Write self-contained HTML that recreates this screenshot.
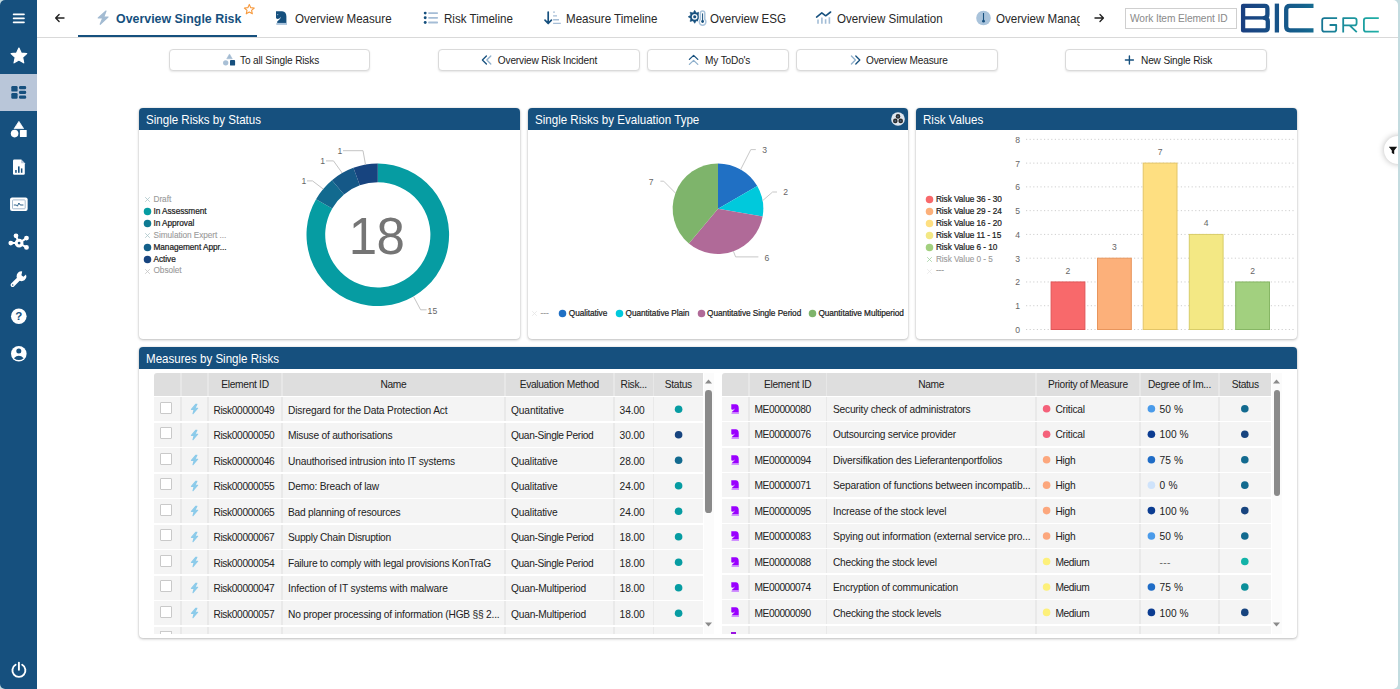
<!DOCTYPE html><html><head><meta charset="utf-8"><title>BIC GRC</title><style>
*{box-sizing:border-box;margin:0;padding:0}
html,body{width:1400px;height:689px;overflow:hidden;background:#c3dce0;font-family:"Liberation Sans",sans-serif;}
#app{position:absolute;left:0;top:0;width:1398px;height:689px;background:#fff;border-radius:5px;overflow:hidden}
.abs{position:absolute}
#side{position:absolute;left:0;top:0;width:37px;height:689px;background:#16507e}
#side .act{position:absolute;left:0;top:74px;width:37px;height:37px;background:#b9c6d9}
#side svg{position:absolute;overflow:visible}
#topline{position:absolute;left:37px;top:36.6px;width:1361px;height:1px;background:#d9d9d9}
#tabline{position:absolute;left:78.2px;top:34.5px;width:178.8px;height:2.4px;background:#16507e}
.tab{position:absolute;top:11px;height:16px;line-height:16px;font-size:12.6px;color:#282828;white-space:nowrap;transform:scaleX(.92);transform-origin:0 50%}
.tab.b{font-weight:700;color:#16507e;font-size:13.3px;transform:scaleX(.932)}
.btn{position:absolute;top:49px;height:22px;border:1px solid #dadada;border-radius:4px;background:#fff;box-shadow:0 1px 2px rgba(0,0,0,.10)}
.bt{position:absolute;top:54px;height:14px;line-height:14px;font-size:10.1px;letter-spacing:-0.15px;color:#222;white-space:nowrap}
.panel{position:absolute;background:#fff;border-radius:4px;box-shadow:0 1px 3px rgba(0,0,0,.24), 0 0 1.5px rgba(0,0,0,.16)}
.ph{position:absolute;left:0;top:0;right:0;height:21.3px;background:#16507e;border-radius:4px 4px 0 0}
.pt{position:absolute;left:7.2px;top:4px;height:16px;line-height:16px;font-size:12.6px;color:#fff;white-space:nowrap;transform:scaleX(.918);transform-origin:0 50%}
.lg{position:absolute;height:10px;line-height:10px;font-size:8.25px;letter-spacing:-0.05px;color:#1c1c1c;white-space:nowrap;-webkit-text-stroke:.22px #1c1c1c}
.lg.off{color:#9a9a9a;-webkit-text-stroke:.1px #9a9a9a}
.dot{position:absolute;border-radius:50%}
.ax{position:absolute;font-size:8.6px;line-height:10px;height:10px;color:#666;white-space:nowrap}
.hc{position:absolute;top:373px;height:22.6px;background:#dedede;}
.ht{position:absolute;top:378.9px;height:12px;line-height:12px;font-size:10.2px;letter-spacing:-0.3px;color:#222;white-space:nowrap;text-align:center}
.rc{position:absolute;height:24px;background:#f4f4f4}
.ct{position:absolute;height:12px;line-height:12px;font-size:10.2px;letter-spacing:-0.19px;color:#222;white-space:nowrap}
.ct.id{letter-spacing:-0.32px}
.cb{position:absolute;width:12px;height:12px;background:#fff;border:1px solid #cfcfcf;border-radius:1px}
</style></head><body><div id="app">
<div id="side"><div class="act"></div>
<svg style="left:0;top:0" width="37" height="689" viewBox="0 0 37 689">
<g stroke="#fff" stroke-width="1.7" stroke-linecap="round"><path d="M13.6 14.3H24M13.6 18.3H24M13.6 22.3H24"/></g>
<polygon points="18.90,48.00 21.19,53.04 26.70,53.67 22.61,57.41 23.72,62.83 18.90,60.10 14.08,62.83 15.19,57.41 11.10,53.67 16.61,53.04" fill="#fff" stroke="#fff" stroke-width="1.2" stroke-linejoin="round"/>
<g fill="#16507e"><rect x="11.3" y="86" width="6.3" height="5.6" rx="1.2"/><rect x="11.3" y="93" width="6.3" height="5.8" rx="1.2"/><rect x="19" y="86" width="7.2" height="3.3" rx="1.4"/><rect x="19" y="90.8" width="7.2" height="3.3" rx="1.4"/><rect x="19" y="95.5" width="7.2" height="3.3" rx="1.4"/></g>
<g fill="#fff"><path d="M18.9 121.4L23.6 128.6H14.2Z" stroke="#fff" stroke-width=".8" stroke-linejoin="round"/><circle cx="14.6" cy="133.6" r="3.8"/><rect x="19.9" y="130" width="6.8" height="7" rx=".6"/></g>
<g><path d="M14.2 159.6H21.2L24.8 163.2V173.6Q24.8 174.8 23.6 174.8H14.2Q13 174.8 13 173.6V160.8Q13 159.6 14.2 159.6Z" fill="#fff"/><path d="M21.2 159.6V163.2H24.8Z" fill="#b9c6d9"/><g fill="#16507e"><rect x="15.2" y="170" width="1.5" height="2.8"/><rect x="18" y="166.4" width="1.6" height="6.4"/><rect x="20.9" y="168.4" width="1.5" height="4.4"/></g></g>
<g><rect x="10.05" y="197.6" width="17.6" height="13.4" rx="2" fill="#fff"/><rect x="12.5" y="199.9" width="12.7" height="8.9" rx=".8" fill="#fff" stroke="#9db4cb" stroke-width=".9"/><path d="M13.8 205H16.4L17.4 206.2L18.9 203L20.2 205H23.4" fill="none" stroke="#16507e" stroke-width=".9" stroke-linejoin="round"/></g>
<g stroke="#fff" stroke-width="2" fill="#fff"><path d="M19.1 243.1L16 235.9M19.1 243.1L26.4 238.2M19.1 243.1L10.9 243.1M19.1 243.1L26.4 247.4" fill="none"/><circle cx="16" cy="235.8" r="1.4"/><circle cx="26.5" cy="238.1" r="1.4"/><circle cx="10.8" cy="243.1" r="1.4"/><circle cx="26.5" cy="247.4" r="1.4"/></g><circle cx="19.1" cy="243.1" r="2.9" fill="#16507e" stroke="#fff" stroke-width="3"/>
<g><path d="M12.6 285L20.2 277.4" stroke="#fff" stroke-width="4" stroke-linecap="round"/><path d="M26 274.4A4.9 4.9 0 1 1 22.2 271.4L21.4 275.2L23.4 276.8Z" fill="#fff"/><circle cx="12.7" cy="284.9" r=".75" fill="#16507e"/></g>
<circle cx="18.8" cy="316.2" r="7.8" fill="#fff"/><text x="18.8" y="320.3" font-size="11.5" font-weight="700" text-anchor="middle" fill="#16507e" font-family="Liberation Sans">?</text>
<circle cx="18.8" cy="353.7" r="7.8" fill="#fff"/><circle cx="18.8" cy="351.1" r="2.5" fill="#16507e"/><path d="M13.9 358.2Q18.8 353.4 23.7 358.2Q18.8 362 13.9 358.2Z" fill="#16507e"/>
<g fill="none" stroke="#fff" stroke-width="1.9" stroke-linecap="round"><path d="M15.6 664.8A6.5 6.5 0 1 0 22.2 664.8"/><path d="M18.9 662.8V669.8"/></g>
</svg></div>
<div id="topline"></div><div id="tabline"></div>
<svg class="abs" style="left:37px;top:0" width="1361" height="37" viewBox="37 0 1361 37">
<g fill="none" stroke="#222" stroke-width="1.4" stroke-linecap="round" stroke-linejoin="round"><path d="M64 18H55.8M59.1 14.6L55.7 18L59.1 21.4"/></g>
<path d="M106 11L98.2 17.9H102.8L100.2 24.3L108 17H103.7Z" fill="#a3bbd2" stroke="#a3bbd2" stroke-width="1.2" stroke-linejoin="round"/>
<polygon points="249.30,4.40 250.71,7.66 254.25,7.99 251.58,10.34 252.36,13.81 249.30,12.00 246.24,13.81 247.02,10.34 244.35,7.99 247.89,7.66" fill="none" stroke="#f79a3e" stroke-width="1.1" stroke-linejoin="round"/>
<path d="M276 11.2H282.2Q286.4 11.6 286.4 16.6V22.9H277.2V21.4Q280.6 19.6 281 16.8Q279.6 19 277.6 19L276 18.2Z" fill="#16507e"/><rect x="276.3" y="22.9" width="10.7" height="2" fill="#a9c3db"/><circle cx="277.7" cy="14.6" r=".6" fill="#a9c3db"/>
<g fill="#16507e"><circle cx="425.2" cy="13.1" r="1.45"/><circle cx="425.2" cy="17.8" r="1.45"/><circle cx="425.2" cy="22.5" r="1.45"/></g><g stroke="#a5bdd6" stroke-width="1.8" stroke-linecap="round"><path d="M429 13.1H437.2M429 17.8H437.2M429 22.5H437.2"/></g>
<g fill="none" stroke="#16507e" stroke-width="1.7" stroke-linecap="round" stroke-linejoin="round"><path d="M548.2 12V23.2M545 20.2L548.2 23.5L551.4 20.2"/></g><g stroke="#a5bdd6" stroke-width="1.4"><path d="M553.1 12.1H554.9M553.1 15.9H557M553.1 19.7H559M553.1 23.4H560.8"/></g>
<polygon points="694.70,10.30 696.31,12.92 699.30,12.20 698.58,15.19 701.20,16.80 698.58,18.41 699.30,21.40 696.31,20.68 694.70,23.30 693.09,20.68 690.10,21.40 690.82,18.41 688.20,16.80 690.82,15.19 690.10,12.20 693.09,12.92" fill="#16507e" stroke="#16507e" stroke-width=".6" stroke-linejoin="round"/><circle cx="694.70" cy="16.80" r="2.9" fill="#f4f7fa"/><circle cx="694.70" cy="16.80" r="1.5" fill="#16507e"/>
<g transform="translate(-.3 0)"><path d="M700.7 19.4V13.2A2.2 2.2 0 0 1 705.1 13.2V19.4A3.3 3.3 0 1 1 700.7 19.4Z" fill="#fff" stroke="#fff" stroke-width="3.2"/><path d="M700.7 19.4V13.2A2.2 2.2 0 0 1 705.1 13.2V19.4A3.3 3.3 0 1 1 700.7 19.4Z" fill="#fff" stroke="#a9c3db" stroke-width="1.5"/><path d="M702.9 13.4V21" stroke="#16507e" stroke-width="1"/><circle cx="702.9" cy="21.5" r="1.4" fill="#16507e"/></g>
<g stroke="#a3bdd6" stroke-width="1.6"><path d="M818 19.6V23.7M821.9 17.4V23.7M825.6 19.2V23.7M829.4 17.2V23.7"/></g><path d="M816.6 17.1L821.8 12.8L825.7 15.8L830.6 12" fill="none" stroke="#16507e" stroke-width="1.6" stroke-linejoin="round" stroke-linecap="round"/>
<circle cx="983.5" cy="18" r="7.3" fill="#a9c3db"/><path d="M983.5 13V20.4" stroke="#16507e" stroke-width="1.1"/><circle cx="983.5" cy="21.2" r="1.4" fill="#16507e"/>
<g fill="none" stroke="#222" stroke-width="1.4" stroke-linecap="round" stroke-linejoin="round"><path d="M1095 18H1103.3M1100 14.6L1103.4 18L1100 21.4"/></g>
</svg>
<div class="tab b" style="left:116.3px">Overview Single Risk</div>
<div class="tab" style="left:294.8px">Overview Measure</div>
<div class="tab" style="left:444.0px">Risk Timeline</div>
<div class="tab" style="left:566.2px">Measure Timeline</div>
<div class="tab" style="left:710.3px">Overview ESG</div>
<div class="tab" style="left:836.8px">Overview Simulation</div>
<div class="tab" style="left:996.4px;width:90.9px;overflow:hidden">Overview Management</div>
<div class="abs" style="left:1125px;top:7.5px;width:112px;height:21px;border:1px solid #cfcfcf;background:#fff"></div>
<div class="abs" style="left:1130px;top:12.8px;height:12px;line-height:12px;font-size:10.2px;letter-spacing:-0.1px;color:#8a8a8a;white-space:nowrap">Work Item Element ID</div>
<svg class="abs" style="left:1236px;top:0" width="150" height="37" viewBox="1236 0 150 37"><defs><linearGradient id="lg1" gradientUnits="userSpaceOnUse" x1="1241" y1="0" x2="1379" y2="0"><stop offset="0" stop-color="#1a3f80"/><stop offset=".45" stop-color="#14618d"/><stop offset="1" stop-color="#1fb0a6"/></linearGradient></defs>
<g fill="none" stroke="url(#lg1)" stroke-width="4.3" stroke-linejoin="round">
<path d="M1243.1 5.8H1264.6Q1267.4 5.8 1267.4 8.6V14.6Q1267.4 17.4 1264.6 17.9Q1267.8 18.4 1267.8 21.2V27.6Q1267.8 30.4 1265 30.4H1243.1Z" />
<path d="M1243.1 17.9H1264.6" stroke-width="3.4"/>
<path d="M1276.9 3.6V32.5" stroke-linejoin="miter"/>
<path d="M1313.5 5.8H1290Q1286.2 5.8 1286.2 9.6V26.6Q1286.2 30.4 1290 30.4H1313.5" />
</g>
<g fill="none" stroke="url(#lg1)" stroke-width="1.8" stroke-linejoin="round">
<path d="M1337.1 18.1H1324.4Q1322.2 18.1 1322.2 20.3V29.4Q1322.2 31.6 1324.4 31.6H1334Q1336.2 31.6 1336.2 29.4V25H1329.6"/>
<path d="M1343.2 32.5V18.1H1354.4Q1356.6 18.1 1356.6 20.3V23.2Q1356.6 25.4 1354.4 25.4H1343.2M1349.6 25.4L1356.8 32.2"/>
<path d="M1378.8 18.1H1366.1Q1363.9 18.1 1363.9 20.3V29.4Q1363.9 31.6 1366.1 31.6H1378.8"/>
</g></svg>
<div class="btn" style="left:169.0px;width:201.0px"></div>
<div class="btn" style="left:438.0px;width:201.5px"></div>
<div class="btn" style="left:647.0px;width:142.0px"></div>
<div class="btn" style="left:796.0px;width:201.5px"></div>
<div class="btn" style="left:1065.0px;width:201.5px"></div>
<svg class="abs" style="left:160px;top:45px" width="1120" height="30" viewBox="160 45 1120 30">
<path d="M229.5 53.9L232.3 58.8H226.7Z" fill="#a3bbd2" stroke="#a3bbd2" stroke-width=".5" stroke-linejoin="round"/><circle cx="225.7" cy="62.8" r="2.65" fill="#a9c0d6"/><rect x="230" y="60" width="5.1" height="5.6" rx=".9" fill="#16507e"/>
<g fill="none" stroke-width="1.3" stroke-linecap="round" stroke-linejoin="round"><path d="M486.4 56L482.4 60L486.4 64" stroke="#16507e"/><path d="M490.8 56L486.8 60L490.8 64" stroke="#8fb0cc"/></g>
<g fill="none" stroke-width="1.3" stroke-linecap="round" stroke-linejoin="round"><path d="M689.4 59.4L693.6 55.4L697.8 59.4" stroke="#16507e"/><path d="M689.4 64.4L693.6 60.4L697.8 64.4" stroke="#8fb0cc"/></g>
<g fill="none" stroke-width="1.3" stroke-linecap="round" stroke-linejoin="round"><path d="M851.4 56L855.4 60L851.4 64" stroke="#8fb0cc"/><path d="M855.8 56L859.8 60L855.8 64" stroke="#16507e"/></g>
<path d="M1125.4 60H1133.4M1129.4 56V64" stroke="#16507e" stroke-width="1.4" stroke-linecap="round"/>
</svg>
<div class="bt" style="left:240.0px">To all Single Risks</div>
<div class="bt" style="left:497.8px">Overview Risk Incident</div>
<div class="bt" style="left:705.0px">My ToDo's</div>
<div class="bt" style="left:866.0px">Overview Measure</div>
<div class="bt" style="left:1141.0px">New Single Risk</div>
<div class="panel" style="left:139.0px;top:108.4px;width:380.9px;height:231.0px"><div class="ph"></div><div class="pt">Single Risks by Status</div></div>
<div class="panel" style="left:527.6px;top:108.4px;width:380.7px;height:231.0px"><div class="ph"></div><div class="pt">Single Risks by Evaluation Type</div></div>
<div class="panel" style="left:916.1px;top:108.4px;width:380.9px;height:231.0px"><div class="ph"></div><div class="pt">Risk Values</div></div>
<div class="panel" style="left:139.0px;top:347.0px;width:1158.0px;height:291.3px"><div class="ph" style="height:21.7px"></div><div class="pt">Measures by Single Risks</div></div>
<svg class="abs" style="left:139px;top:130px" width="1160" height="210" viewBox="139 130 1160 210">
<path d="M377.80 163.50A71.30 71.30 0 1 1 316.05 199.15L332.25 208.50A52.60 52.60 0 1 0 377.80 182.20Z" fill="#069ca2"/>
<path d="M316.05 199.15A71.30 71.30 0 0 1 331.97 180.18L343.99 194.51A52.60 52.60 0 0 0 332.25 208.50Z" fill="#126a8f"/>
<path d="M331.97 180.18A71.30 71.30 0 0 1 353.41 167.80L359.81 185.37A52.60 52.60 0 0 0 343.99 194.51Z" fill="#155887"/>
<path d="M353.41 167.80A71.30 71.30 0 0 1 377.80 163.50L377.80 182.20A52.60 52.60 0 0 0 359.81 185.37Z" fill="#17447f"/>
<g fill="none" stroke="#c4c4c4" stroke-width="1">
<path d="M343 150.7H363L365.5 164.6"/>
<path d="M326 160.9H333.5L342.2 173"/>
<path d="M307 180.9H312.5L323.2 189"/>
<path d="M413.6 296.6L420.6 309.8H426.6"/>
</g>
<path d="M718.00 208.70L718.00 163.40A45.30 45.30 0 0 1 757.23 186.05Z" fill="#2070c4"/>
<path d="M718.00 208.70L757.23 186.05A45.30 45.30 0 0 1 762.61 216.57Z" fill="#00c9dc"/>
<path d="M718.00 208.70L762.61 216.57A45.30 45.30 0 0 1 688.88 243.40Z" fill="#b06a98"/>
<path d="M718.00 208.70L688.88 243.40A45.30 45.30 0 0 1 718.00 163.40Z" fill="#7eb46b"/>
<g fill="none" stroke="#c8c8c8" stroke-width="1">
<path d="M740.6 169.6L750.8 149.6H755.8"/>
<path d="M762.4 200.8L772.6 192H777"/>
<path d="M733.4 251.2L735.6 256.9H758.4"/>
<path d="M675.6 193.2L663.7 181.2H660.4"/>
</g>
<path d="M1026 329.50H1294" stroke="#cfcfcf" stroke-width="1" stroke-dasharray="1.2 2.4"/>
<path d="M1026 305.73H1294" stroke="#cfcfcf" stroke-width="1" stroke-dasharray="1.2 2.4"/>
<path d="M1026 281.96H1294" stroke="#cfcfcf" stroke-width="1" stroke-dasharray="1.2 2.4"/>
<path d="M1026 258.19H1294" stroke="#cfcfcf" stroke-width="1" stroke-dasharray="1.2 2.4"/>
<path d="M1026 234.42H1294" stroke="#cfcfcf" stroke-width="1" stroke-dasharray="1.2 2.4"/>
<path d="M1026 210.65H1294" stroke="#cfcfcf" stroke-width="1" stroke-dasharray="1.2 2.4"/>
<path d="M1026 186.88H1294" stroke="#cfcfcf" stroke-width="1" stroke-dasharray="1.2 2.4"/>
<path d="M1026 163.11H1294" stroke="#cfcfcf" stroke-width="1" stroke-dasharray="1.2 2.4"/>
<path d="M1026 139.34H1294" stroke="#cfcfcf" stroke-width="1" stroke-dasharray="1.2 2.4"/>
<rect x="1051.10" y="281.96" width="33.8" height="47.54" fill="#f8696b" stroke="#e05557" stroke-width="1"/>
<rect x="1097.50" y="258.19" width="33.8" height="71.31" fill="#fcb07a" stroke="#e8955c" stroke-width="1"/>
<rect x="1143.20" y="163.11" width="33.8" height="166.39" fill="#fedf81" stroke="#e3c567" stroke-width="1"/>
<rect x="1189.30" y="234.42" width="33.8" height="95.08" fill="#f3e884" stroke="#d8cd68" stroke-width="1"/>
<rect x="1235.70" y="281.96" width="33.8" height="47.54" fill="#a2d07f" stroke="#86b664" stroke-width="1"/>
</svg>
<div class="abs" style="left:326.6px;top:207.4px;width:100px;height:60px;line-height:60px;text-align:center;font-size:51px;letter-spacing:-0.5px;color:#757575">18</div>
<div class="ax" style="top:146.0px;color:#666;left:325.0px;width:30px;text-align:center">1</div>
<div class="ax" style="top:156.4px;color:#666;left:307.6px;width:30px;text-align:center">1</div>
<div class="ax" style="top:176.2px;color:#666;left:288.8px;width:30px;text-align:center">1</div>
<div class="ax" style="top:305.6px;color:#666;left:417.4px;width:30px;text-align:center">15</div>
<div class="ax" style="top:145.2px;color:#666;left:749.6px;width:30px;text-align:center">3</div>
<div class="ax" style="top:187.4px;color:#666;left:770.6px;width:30px;text-align:center">2</div>
<div class="ax" style="top:252.8px;color:#666;left:751.8px;width:30px;text-align:center">6</div>
<div class="ax" style="top:176.6px;color:#666;left:636.2px;width:30px;text-align:center">7</div>
<div class="ax" style="top:324.9px;color:#666;left:1002.6px;width:30px;text-align:center">0</div>
<div class="ax" style="top:301.1px;color:#666;left:1002.6px;width:30px;text-align:center">1</div>
<div class="ax" style="top:277.4px;color:#666;left:1002.6px;width:30px;text-align:center">2</div>
<div class="ax" style="top:253.6px;color:#666;left:1002.6px;width:30px;text-align:center">3</div>
<div class="ax" style="top:229.8px;color:#666;left:1002.6px;width:30px;text-align:center">4</div>
<div class="ax" style="top:206.1px;color:#666;left:1002.6px;width:30px;text-align:center">5</div>
<div class="ax" style="top:182.3px;color:#666;left:1002.6px;width:30px;text-align:center">6</div>
<div class="ax" style="top:158.5px;color:#666;left:1002.6px;width:30px;text-align:center">7</div>
<div class="ax" style="top:134.7px;color:#666;left:1002.6px;width:30px;text-align:center">8</div>
<div class="ax" style="top:265.8px;color:#666;left:1053.0px;width:30px;text-align:center">2</div>
<div class="ax" style="top:242.0px;color:#666;left:1099.4px;width:30px;text-align:center">3</div>
<div class="ax" style="top:146.9px;color:#666;left:1145.1px;width:30px;text-align:center">7</div>
<div class="ax" style="top:218.2px;color:#666;left:1191.2px;width:30px;text-align:center">4</div>
<div class="ax" style="top:265.8px;color:#666;left:1237.6px;width:30px;text-align:center">2</div>
<svg class="abs" style="left:143.9px;top:196.1px" width="7" height="7" viewBox="0 0 7 7"><path d="M1.2 1.2L5.8 5.8M5.8 1.2L1.2 5.8" stroke="#a9c4c8" stroke-width=".8"/></svg>
<div class="lg off" style="left:153.5px;top:195.0px">Draft</div>
<svg class="abs" style="left:142.9px;top:207.0px" width="9" height="9" viewBox="-4.5 -4.5 9 9"><circle r="3.75" fill="#069ca2"/></svg>
<div class="lg" style="left:153.5px;top:206.9px">In Assessment</div>
<svg class="abs" style="left:142.9px;top:218.9px" width="9" height="9" viewBox="-4.5 -4.5 9 9"><circle r="3.75" fill="#0f7b93"/></svg>
<div class="lg" style="left:153.5px;top:218.8px">In Approval</div>
<svg class="abs" style="left:143.9px;top:231.8px" width="7" height="7" viewBox="0 0 7 7"><path d="M1.2 1.2L5.8 5.8M5.8 1.2L1.2 5.8" stroke="#a9c4c8" stroke-width=".8"/></svg>
<div class="lg off" style="left:153.5px;top:230.7px">Simulation Expert ...</div>
<svg class="abs" style="left:142.9px;top:242.7px" width="9" height="9" viewBox="-4.5 -4.5 9 9"><circle r="3.75" fill="#14608a"/></svg>
<div class="lg" style="left:153.5px;top:242.6px">Management Appr...</div>
<svg class="abs" style="left:142.9px;top:254.6px" width="9" height="9" viewBox="-4.5 -4.5 9 9"><circle r="3.75" fill="#17447f"/></svg>
<div class="lg" style="left:153.5px;top:254.5px">Active</div>
<svg class="abs" style="left:143.9px;top:267.5px" width="7" height="7" viewBox="0 0 7 7"><path d="M1.2 1.2L5.8 5.8M5.8 1.2L1.2 5.8" stroke="#c4c4c4" stroke-width=".8"/></svg>
<div class="lg off" style="left:153.5px;top:266.4px">Obsolet</div>
<svg class="abs" style="left:530.9px;top:310.3px" width="7" height="7" viewBox="0 0 7 7"><path d="M1.2 1.2L5.8 5.8M5.8 1.2L1.2 5.8" stroke="#e4e4e4" stroke-width=".8"/></svg>
<div class="lg off" style="left:540.5px;top:309.2px">---</div>
<svg class="abs" style="left:558.2px;top:309.3px" width="9" height="9" viewBox="-4.5 -4.5 9 9"><circle r="3.75" fill="#2070c4"/></svg>
<div class="lg" style="left:568.8px;top:309.2px">Qualitative</div>
<svg class="abs" style="left:615.0px;top:309.3px" width="9" height="9" viewBox="-4.5 -4.5 9 9"><circle r="3.75" fill="#00c9dc"/></svg>
<div class="lg" style="left:625.6px;top:309.2px">Quantitative Plain</div>
<svg class="abs" style="left:696.5px;top:309.3px" width="9" height="9" viewBox="-4.5 -4.5 9 9"><circle r="3.75" fill="#b06a98"/></svg>
<div class="lg" style="left:707.1px;top:309.2px">Quantitative Single Period</div>
<svg class="abs" style="left:807.8px;top:309.3px" width="9" height="9" viewBox="-4.5 -4.5 9 9"><circle r="3.75" fill="#7eb46b"/></svg>
<div class="lg" style="left:818.4px;top:309.2px">Quantitative Multiperiod</div>
<svg class="abs" style="left:925.3px;top:195.1px" width="9" height="9" viewBox="-4.5 -4.5 9 9"><circle r="3.75" fill="#f8696b"/></svg>
<div class="lg" style="left:935.9px;top:195.0px">Risk Value 36 - 30</div>
<svg class="abs" style="left:925.3px;top:207.0px" width="9" height="9" viewBox="-4.5 -4.5 9 9"><circle r="3.75" fill="#fcb07a"/></svg>
<div class="lg" style="left:935.9px;top:206.9px">Risk Value 29 - 24</div>
<svg class="abs" style="left:925.3px;top:218.9px" width="9" height="9" viewBox="-4.5 -4.5 9 9"><circle r="3.75" fill="#fedf81"/></svg>
<div class="lg" style="left:935.9px;top:218.8px">Risk Value 16 - 20</div>
<svg class="abs" style="left:925.3px;top:230.8px" width="9" height="9" viewBox="-4.5 -4.5 9 9"><circle r="3.75" fill="#f3e884"/></svg>
<div class="lg" style="left:935.9px;top:230.7px">Risk Value 11 - 15</div>
<svg class="abs" style="left:925.3px;top:242.7px" width="9" height="9" viewBox="-4.5 -4.5 9 9"><circle r="3.75" fill="#a2d07f"/></svg>
<div class="lg" style="left:935.9px;top:242.6px">Risk Value 6 - 10</div>
<svg class="abs" style="left:926.3px;top:255.6px" width="7" height="7" viewBox="0 0 7 7"><path d="M1.2 1.2L5.8 5.8M5.8 1.2L1.2 5.8" stroke="#9fd0a0" stroke-width=".8"/></svg>
<div class="lg off" style="left:935.9px;top:254.5px">Risk Value 0 - 5</div>
<svg class="abs" style="left:926.3px;top:267.5px" width="7" height="7" viewBox="0 0 7 7"><path d="M1.2 1.2L5.8 5.8M5.8 1.2L1.2 5.8" stroke="#e8e8e8" stroke-width=".8"/></svg>
<div class="lg off" style="left:935.9px;top:266.4px">---</div>
<svg class="abs" style="left:890.1px;top:111px" width="16" height="16" viewBox="0 0 16 16"><circle cx="8" cy="8" r="6.85" fill="#dfe6ee"/><g fill="#2b2b2b"><circle cx="8" cy="5.4" r="2.3"/><circle cx="5.3" cy="9.9" r="2.3"/><circle cx="10.7" cy="9.9" r="2.3"/></g><g fill="#47617f"><circle cx="8" cy="5.4" r=".9"/><circle cx="5.3" cy="9.9" r=".9"/><circle cx="10.7" cy="9.9" r=".9"/></g></svg>
<div class="abs" style="left:1384.4px;top:136.2px;width:30px;height:27.8px;border-radius:14px;background:#fff;box-shadow:0 0 6px rgba(0,0,0,.28)"></div>
<svg class="abs" style="left:1387.8px;top:146px" width="11" height="10" viewBox="0 0 11 10"><path d="M.8 .8H9.2L6.2 4.4V8.2L3.8 7V4.4Z" fill="#111"/></svg>
<div class="abs" style="left:139px;top:369px;width:1158px;height:264.6px;overflow:hidden">
<div class="abs" style="left:15.0px;top:3.7px;width:549.0px;height:22.9px;background:#dedede;border-radius:3px 0 0 0"></div>
<div class="abs" style="left:41.4px;top:3.7px;width:1.6px;height:22.9px;background:#e7e7e7;"></div>
<div class="abs" style="left:68.2px;top:3.7px;width:1.6px;height:22.9px;background:#e7e7e7;"></div>
<div class="abs" style="left:142.2px;top:3.7px;width:1.6px;height:22.9px;background:#e7e7e7;"></div>
<div class="abs" style="left:365.0px;top:3.7px;width:1.6px;height:22.9px;background:#e7e7e7;"></div>
<div class="abs" style="left:474.0px;top:3.7px;width:1.6px;height:22.9px;background:#e7e7e7;"></div>
<div class="abs" style="left:513.8px;top:3.7px;width:1.6px;height:22.9px;background:#e7e7e7;"></div>
<div class="ht" style="left:69.0px;top:9.9px;width:74.0px;text-align:center;">Element ID</div>
<div class="ht" style="left:143.0px;top:9.9px;width:222.8px;text-align:center;">Name</div>
<div class="ht" style="left:365.8px;top:9.9px;width:109.0px;text-align:center;">Evaluation Method</div>
<div class="ht" style="left:474.8px;top:9.9px;width:39.8px;text-align:center;">Risk...</div>
<div class="ht" style="left:514.6px;top:9.9px;width:49.4px;text-align:center;">Status</div>
<div class="abs" style="left:15.0px;top:28.2px;width:549.0px;height:24.0px;background:#f4f4f4;"></div>
<div class="abs" style="left:41.4px;top:28.2px;width:1.6px;height:24.0px;background:#e9e9e9;"></div>
<div class="abs" style="left:68.2px;top:28.2px;width:1.6px;height:24.0px;background:#e9e9e9;"></div>
<div class="abs" style="left:142.2px;top:28.2px;width:1.6px;height:24.0px;background:#e9e9e9;"></div>
<div class="abs" style="left:365.0px;top:28.2px;width:1.6px;height:24.0px;background:#e9e9e9;"></div>
<div class="abs" style="left:474.0px;top:28.2px;width:1.6px;height:24.0px;background:#e9e9e9;"></div>
<div class="abs" style="left:513.8px;top:28.2px;width:1.6px;height:24.0px;background:#e9e9e9;"></div>
<div class="abs" style="left:21.0px;top:32.5px;width:12.0px;height:12.4px;background:#fff;border:1px solid #c9c9c9;border-radius:1px"></div>
<svg class="abs" style="left:51.2px;top:34.1px" width="9" height="12" viewBox="0 0 9 12"><path d="M5.9 1.2L1.4 6.4H4.2L3 10.6L7.7 5.2H4.9L6.9 1.2Z" fill="#8ccbea" stroke="#8ccbea" stroke-width="1.1" stroke-linejoin="round"/></svg>
<div class="ct id" style="left:74.4px;top:35.5px;letter-spacing:-0.353px;">Risk00000049</div>
<div class="ct" style="left:149.0px;top:35.5px;letter-spacing:-0.176px;">Disregard for the Data Protection Act</div>
<div class="ct" style="left:372.0px;top:35.5px;letter-spacing:-0.123px;">Quantitative</div>
<div class="ct" style="left:480.6px;top:35.5px;letter-spacing:-0.12px;">34.00</div>
<div class="abs" style="left:15.0px;top:53.7px;width:549.0px;height:24.0px;background:#f4f4f4;"></div>
<div class="abs" style="left:41.4px;top:53.7px;width:1.6px;height:24.0px;background:#e9e9e9;"></div>
<div class="abs" style="left:68.2px;top:53.7px;width:1.6px;height:24.0px;background:#e9e9e9;"></div>
<div class="abs" style="left:142.2px;top:53.7px;width:1.6px;height:24.0px;background:#e9e9e9;"></div>
<div class="abs" style="left:365.0px;top:53.7px;width:1.6px;height:24.0px;background:#e9e9e9;"></div>
<div class="abs" style="left:474.0px;top:53.7px;width:1.6px;height:24.0px;background:#e9e9e9;"></div>
<div class="abs" style="left:513.8px;top:53.7px;width:1.6px;height:24.0px;background:#e9e9e9;"></div>
<div class="abs" style="left:21.0px;top:58.0px;width:12.0px;height:12.4px;background:#fff;border:1px solid #c9c9c9;border-radius:1px"></div>
<svg class="abs" style="left:51.2px;top:59.6px" width="9" height="12" viewBox="0 0 9 12"><path d="M5.9 1.2L1.4 6.4H4.2L3 10.6L7.7 5.2H4.9L6.9 1.2Z" fill="#8ccbea" stroke="#8ccbea" stroke-width="1.1" stroke-linejoin="round"/></svg>
<div class="ct id" style="left:74.4px;top:61.0px;letter-spacing:-0.353px;">Risk00000050</div>
<div class="ct" style="left:149.0px;top:61.0px;letter-spacing:-0.227px;">Misuse of authorisations</div>
<div class="ct" style="left:372.0px;top:61.0px;letter-spacing:-0.362px;">Quan-Single Period</div>
<div class="ct" style="left:480.6px;top:61.0px;letter-spacing:-0.12px;">30.00</div>
<div class="abs" style="left:15.0px;top:79.2px;width:549.0px;height:24.0px;background:#f4f4f4;"></div>
<div class="abs" style="left:41.4px;top:79.2px;width:1.6px;height:24.0px;background:#e9e9e9;"></div>
<div class="abs" style="left:68.2px;top:79.2px;width:1.6px;height:24.0px;background:#e9e9e9;"></div>
<div class="abs" style="left:142.2px;top:79.2px;width:1.6px;height:24.0px;background:#e9e9e9;"></div>
<div class="abs" style="left:365.0px;top:79.2px;width:1.6px;height:24.0px;background:#e9e9e9;"></div>
<div class="abs" style="left:474.0px;top:79.2px;width:1.6px;height:24.0px;background:#e9e9e9;"></div>
<div class="abs" style="left:513.8px;top:79.2px;width:1.6px;height:24.0px;background:#e9e9e9;"></div>
<div class="abs" style="left:21.0px;top:83.5px;width:12.0px;height:12.4px;background:#fff;border:1px solid #c9c9c9;border-radius:1px"></div>
<svg class="abs" style="left:51.2px;top:85.1px" width="9" height="12" viewBox="0 0 9 12"><path d="M5.9 1.2L1.4 6.4H4.2L3 10.6L7.7 5.2H4.9L6.9 1.2Z" fill="#8ccbea" stroke="#8ccbea" stroke-width="1.1" stroke-linejoin="round"/></svg>
<div class="ct id" style="left:74.4px;top:86.5px;letter-spacing:-0.353px;">Risk00000046</div>
<div class="ct" style="left:149.0px;top:86.5px;letter-spacing:-0.163px;">Unauthorised intrusion into IT systems</div>
<div class="ct" style="left:372.0px;top:86.5px;letter-spacing:-0.158px;">Qualitative</div>
<div class="ct" style="left:480.6px;top:86.5px;letter-spacing:-0.12px;">28.00</div>
<div class="abs" style="left:15.0px;top:104.7px;width:549.0px;height:24.0px;background:#f4f4f4;"></div>
<div class="abs" style="left:41.4px;top:104.7px;width:1.6px;height:24.0px;background:#e9e9e9;"></div>
<div class="abs" style="left:68.2px;top:104.7px;width:1.6px;height:24.0px;background:#e9e9e9;"></div>
<div class="abs" style="left:142.2px;top:104.7px;width:1.6px;height:24.0px;background:#e9e9e9;"></div>
<div class="abs" style="left:365.0px;top:104.7px;width:1.6px;height:24.0px;background:#e9e9e9;"></div>
<div class="abs" style="left:474.0px;top:104.7px;width:1.6px;height:24.0px;background:#e9e9e9;"></div>
<div class="abs" style="left:513.8px;top:104.7px;width:1.6px;height:24.0px;background:#e9e9e9;"></div>
<div class="abs" style="left:21.0px;top:109.0px;width:12.0px;height:12.4px;background:#fff;border:1px solid #c9c9c9;border-radius:1px"></div>
<svg class="abs" style="left:51.2px;top:110.6px" width="9" height="12" viewBox="0 0 9 12"><path d="M5.9 1.2L1.4 6.4H4.2L3 10.6L7.7 5.2H4.9L6.9 1.2Z" fill="#8ccbea" stroke="#8ccbea" stroke-width="1.1" stroke-linejoin="round"/></svg>
<div class="ct id" style="left:74.4px;top:112.0px;letter-spacing:-0.353px;">Risk00000055</div>
<div class="ct" style="left:149.0px;top:112.0px;letter-spacing:-0.193px;">Demo: Breach of law</div>
<div class="ct" style="left:372.0px;top:112.0px;letter-spacing:-0.158px;">Qualitative</div>
<div class="ct" style="left:480.6px;top:112.0px;letter-spacing:-0.12px;">24.00</div>
<div class="abs" style="left:15.0px;top:130.2px;width:549.0px;height:24.0px;background:#f4f4f4;"></div>
<div class="abs" style="left:41.4px;top:130.2px;width:1.6px;height:24.0px;background:#e9e9e9;"></div>
<div class="abs" style="left:68.2px;top:130.2px;width:1.6px;height:24.0px;background:#e9e9e9;"></div>
<div class="abs" style="left:142.2px;top:130.2px;width:1.6px;height:24.0px;background:#e9e9e9;"></div>
<div class="abs" style="left:365.0px;top:130.2px;width:1.6px;height:24.0px;background:#e9e9e9;"></div>
<div class="abs" style="left:474.0px;top:130.2px;width:1.6px;height:24.0px;background:#e9e9e9;"></div>
<div class="abs" style="left:513.8px;top:130.2px;width:1.6px;height:24.0px;background:#e9e9e9;"></div>
<div class="abs" style="left:21.0px;top:134.5px;width:12.0px;height:12.4px;background:#fff;border:1px solid #c9c9c9;border-radius:1px"></div>
<svg class="abs" style="left:51.2px;top:136.1px" width="9" height="12" viewBox="0 0 9 12"><path d="M5.9 1.2L1.4 6.4H4.2L3 10.6L7.7 5.2H4.9L6.9 1.2Z" fill="#8ccbea" stroke="#8ccbea" stroke-width="1.1" stroke-linejoin="round"/></svg>
<div class="ct id" style="left:74.4px;top:137.5px;letter-spacing:-0.353px;">Risk00000065</div>
<div class="ct" style="left:149.0px;top:137.5px;letter-spacing:-0.239px;">Bad planning of resources</div>
<div class="ct" style="left:372.0px;top:137.5px;letter-spacing:-0.158px;">Qualitative</div>
<div class="ct" style="left:480.6px;top:137.5px;letter-spacing:-0.12px;">24.00</div>
<div class="abs" style="left:15.0px;top:155.7px;width:549.0px;height:24.0px;background:#f4f4f4;"></div>
<div class="abs" style="left:41.4px;top:155.7px;width:1.6px;height:24.0px;background:#e9e9e9;"></div>
<div class="abs" style="left:68.2px;top:155.7px;width:1.6px;height:24.0px;background:#e9e9e9;"></div>
<div class="abs" style="left:142.2px;top:155.7px;width:1.6px;height:24.0px;background:#e9e9e9;"></div>
<div class="abs" style="left:365.0px;top:155.7px;width:1.6px;height:24.0px;background:#e9e9e9;"></div>
<div class="abs" style="left:474.0px;top:155.7px;width:1.6px;height:24.0px;background:#e9e9e9;"></div>
<div class="abs" style="left:513.8px;top:155.7px;width:1.6px;height:24.0px;background:#e9e9e9;"></div>
<div class="abs" style="left:21.0px;top:160.0px;width:12.0px;height:12.4px;background:#fff;border:1px solid #c9c9c9;border-radius:1px"></div>
<svg class="abs" style="left:51.2px;top:161.6px" width="9" height="12" viewBox="0 0 9 12"><path d="M5.9 1.2L1.4 6.4H4.2L3 10.6L7.7 5.2H4.9L6.9 1.2Z" fill="#8ccbea" stroke="#8ccbea" stroke-width="1.1" stroke-linejoin="round"/></svg>
<div class="ct id" style="left:74.4px;top:163.0px;letter-spacing:-0.353px;">Risk00000067</div>
<div class="ct" style="left:149.0px;top:163.0px;letter-spacing:-0.278px;">Supply Chain Disruption</div>
<div class="ct" style="left:372.0px;top:163.0px;letter-spacing:-0.362px;">Quan-Single Period</div>
<div class="ct" style="left:480.6px;top:163.0px;letter-spacing:-0.12px;">18.00</div>
<div class="abs" style="left:15.0px;top:181.2px;width:549.0px;height:24.0px;background:#f4f4f4;"></div>
<div class="abs" style="left:41.4px;top:181.2px;width:1.6px;height:24.0px;background:#e9e9e9;"></div>
<div class="abs" style="left:68.2px;top:181.2px;width:1.6px;height:24.0px;background:#e9e9e9;"></div>
<div class="abs" style="left:142.2px;top:181.2px;width:1.6px;height:24.0px;background:#e9e9e9;"></div>
<div class="abs" style="left:365.0px;top:181.2px;width:1.6px;height:24.0px;background:#e9e9e9;"></div>
<div class="abs" style="left:474.0px;top:181.2px;width:1.6px;height:24.0px;background:#e9e9e9;"></div>
<div class="abs" style="left:513.8px;top:181.2px;width:1.6px;height:24.0px;background:#e9e9e9;"></div>
<div class="abs" style="left:21.0px;top:185.5px;width:12.0px;height:12.4px;background:#fff;border:1px solid #c9c9c9;border-radius:1px"></div>
<svg class="abs" style="left:51.2px;top:187.1px" width="9" height="12" viewBox="0 0 9 12"><path d="M5.9 1.2L1.4 6.4H4.2L3 10.6L7.7 5.2H4.9L6.9 1.2Z" fill="#8ccbea" stroke="#8ccbea" stroke-width="1.1" stroke-linejoin="round"/></svg>
<div class="ct id" style="left:74.4px;top:188.5px;letter-spacing:-0.353px;">Risk00000054</div>
<div class="ct" style="left:149.0px;top:188.5px;letter-spacing:-0.265px;">Failure to comply with legal provisions KonTraG</div>
<div class="ct" style="left:372.0px;top:188.5px;letter-spacing:-0.362px;">Quan-Single Period</div>
<div class="ct" style="left:480.6px;top:188.5px;letter-spacing:-0.12px;">18.00</div>
<div class="abs" style="left:15.0px;top:206.7px;width:549.0px;height:24.0px;background:#f4f4f4;"></div>
<div class="abs" style="left:41.4px;top:206.7px;width:1.6px;height:24.0px;background:#e9e9e9;"></div>
<div class="abs" style="left:68.2px;top:206.7px;width:1.6px;height:24.0px;background:#e9e9e9;"></div>
<div class="abs" style="left:142.2px;top:206.7px;width:1.6px;height:24.0px;background:#e9e9e9;"></div>
<div class="abs" style="left:365.0px;top:206.7px;width:1.6px;height:24.0px;background:#e9e9e9;"></div>
<div class="abs" style="left:474.0px;top:206.7px;width:1.6px;height:24.0px;background:#e9e9e9;"></div>
<div class="abs" style="left:513.8px;top:206.7px;width:1.6px;height:24.0px;background:#e9e9e9;"></div>
<div class="abs" style="left:21.0px;top:211.0px;width:12.0px;height:12.4px;background:#fff;border:1px solid #c9c9c9;border-radius:1px"></div>
<svg class="abs" style="left:51.2px;top:212.6px" width="9" height="12" viewBox="0 0 9 12"><path d="M5.9 1.2L1.4 6.4H4.2L3 10.6L7.7 5.2H4.9L6.9 1.2Z" fill="#8ccbea" stroke="#8ccbea" stroke-width="1.1" stroke-linejoin="round"/></svg>
<div class="ct id" style="left:74.4px;top:214.0px;letter-spacing:-0.353px;">Risk00000047</div>
<div class="ct" style="left:149.0px;top:214.0px;letter-spacing:-0.114px;">Infection of IT systems with malware</div>
<div class="ct" style="left:372.0px;top:214.0px;letter-spacing:-0.204px;">Quan-Multiperiod</div>
<div class="ct" style="left:480.6px;top:214.0px;letter-spacing:-0.12px;">18.00</div>
<div class="abs" style="left:15.0px;top:232.2px;width:549.0px;height:24.0px;background:#f4f4f4;"></div>
<div class="abs" style="left:41.4px;top:232.2px;width:1.6px;height:24.0px;background:#e9e9e9;"></div>
<div class="abs" style="left:68.2px;top:232.2px;width:1.6px;height:24.0px;background:#e9e9e9;"></div>
<div class="abs" style="left:142.2px;top:232.2px;width:1.6px;height:24.0px;background:#e9e9e9;"></div>
<div class="abs" style="left:365.0px;top:232.2px;width:1.6px;height:24.0px;background:#e9e9e9;"></div>
<div class="abs" style="left:474.0px;top:232.2px;width:1.6px;height:24.0px;background:#e9e9e9;"></div>
<div class="abs" style="left:513.8px;top:232.2px;width:1.6px;height:24.0px;background:#e9e9e9;"></div>
<div class="abs" style="left:21.0px;top:236.5px;width:12.0px;height:12.4px;background:#fff;border:1px solid #c9c9c9;border-radius:1px"></div>
<svg class="abs" style="left:51.2px;top:238.1px" width="9" height="12" viewBox="0 0 9 12"><path d="M5.9 1.2L1.4 6.4H4.2L3 10.6L7.7 5.2H4.9L6.9 1.2Z" fill="#8ccbea" stroke="#8ccbea" stroke-width="1.1" stroke-linejoin="round"/></svg>
<div class="ct id" style="left:74.4px;top:239.5px;letter-spacing:-0.353px;">Risk00000057</div>
<div class="ct" style="left:149.0px;top:239.5px;letter-spacing:-0.208px;">No proper processing of information (HGB §§ 2...</div>
<div class="ct" style="left:372.0px;top:239.5px;letter-spacing:-0.204px;">Quan-Multiperiod</div>
<div class="ct" style="left:480.6px;top:239.5px;letter-spacing:-0.12px;">18.00</div>
<div class="abs" style="left:15.0px;top:257.7px;width:549.0px;height:24.0px;background:#f4f4f4;"></div>
<div class="abs" style="left:41.4px;top:257.7px;width:1.6px;height:24.0px;background:#e9e9e9;"></div>
<div class="abs" style="left:68.2px;top:257.7px;width:1.6px;height:24.0px;background:#e9e9e9;"></div>
<div class="abs" style="left:142.2px;top:257.7px;width:1.6px;height:24.0px;background:#e9e9e9;"></div>
<div class="abs" style="left:365.0px;top:257.7px;width:1.6px;height:24.0px;background:#e9e9e9;"></div>
<div class="abs" style="left:474.0px;top:257.7px;width:1.6px;height:24.0px;background:#e9e9e9;"></div>
<div class="abs" style="left:513.8px;top:257.7px;width:1.6px;height:24.0px;background:#e9e9e9;"></div>
<div class="abs" style="left:21.0px;top:261.9px;width:12.0px;height:12.0px;background:#fff;border:1px solid #cbcbcb"></div>
<div class="abs" style="left:582.6px;top:3.7px;width:549.8px;height:22.9px;background:#dedede;border-radius:3px 0 0 0"></div>
<div class="abs" style="left:609.0px;top:3.7px;width:1.6px;height:22.9px;background:#e7e7e7;"></div>
<div class="abs" style="left:686.8px;top:3.7px;width:1.6px;height:22.9px;background:#e7e7e7;"></div>
<div class="abs" style="left:896.0px;top:3.7px;width:1.6px;height:22.9px;background:#e7e7e7;"></div>
<div class="abs" style="left:1000.2px;top:3.7px;width:1.6px;height:22.9px;background:#e7e7e7;"></div>
<div class="abs" style="left:1079.2px;top:3.7px;width:1.6px;height:22.9px;background:#e7e7e7;"></div>
<div class="ht" style="left:609.8px;top:9.9px;width:77.8px;text-align:center;">Element ID</div>
<div class="ht" style="left:687.6px;top:9.9px;width:209.2px;text-align:center;">Name</div>
<div class="ht" style="left:896.8px;top:9.9px;width:104.2px;text-align:center;">Priority of Measure</div>
<div class="ht" style="left:1001.0px;top:9.9px;width:79.0px;text-align:center;">Degree of Im...</div>
<div class="ht" style="left:1080.0px;top:9.9px;width:52.4px;text-align:center;">Status</div>
<div class="abs" style="left:582.6px;top:27.7px;width:549.8px;height:24.0px;background:#f4f4f4;"></div>
<div class="abs" style="left:609.0px;top:27.7px;width:1.6px;height:24.0px;background:#e9e9e9;"></div>
<div class="abs" style="left:686.8px;top:27.7px;width:1.6px;height:24.0px;background:#e9e9e9;"></div>
<div class="abs" style="left:896.0px;top:27.7px;width:1.6px;height:24.0px;background:#e9e9e9;"></div>
<div class="abs" style="left:1000.2px;top:27.7px;width:1.6px;height:24.0px;background:#e9e9e9;"></div>
<div class="abs" style="left:1079.2px;top:27.7px;width:1.6px;height:24.0px;background:#e9e9e9;"></div>
<svg class="abs" style="left:591.5px;top:34.8px" width="8.3" height="10.2" viewBox="275.6 11 11.6 14.2"><path d="M276 11.2H282.2Q286.4 11.6 286.4 16.6V22.9H277.2V21.4Q280.6 19.6 281 16.8Q279.6 19 277.6 19L276 18.2Z" fill="#9a00ff"/><rect x="276.3" y="22.9" width="10.7" height="2" fill="#cf8cff"/></svg>
<div class="ct id" style="left:615.5px;top:35.0px;letter-spacing:-0.431px;">ME00000080</div>
<div class="ct" style="left:694.0px;top:35.0px;letter-spacing:-0.218px;">Security check of administrators</div>
<div class="ct" style="left:916.4px;top:35.0px;letter-spacing:-0.205px;">Critical</div>
<div class="ct" style="left:1020.6px;top:35.0px;letter-spacing:0.066px;">50 %</div>
<div class="abs" style="left:582.6px;top:53.1px;width:549.8px;height:24.0px;background:#f4f4f4;"></div>
<div class="abs" style="left:609.0px;top:53.1px;width:1.6px;height:24.0px;background:#e9e9e9;"></div>
<div class="abs" style="left:686.8px;top:53.1px;width:1.6px;height:24.0px;background:#e9e9e9;"></div>
<div class="abs" style="left:896.0px;top:53.1px;width:1.6px;height:24.0px;background:#e9e9e9;"></div>
<div class="abs" style="left:1000.2px;top:53.1px;width:1.6px;height:24.0px;background:#e9e9e9;"></div>
<div class="abs" style="left:1079.2px;top:53.1px;width:1.6px;height:24.0px;background:#e9e9e9;"></div>
<svg class="abs" style="left:591.5px;top:60.2px" width="8.3" height="10.2" viewBox="275.6 11 11.6 14.2"><path d="M276 11.2H282.2Q286.4 11.6 286.4 16.6V22.9H277.2V21.4Q280.6 19.6 281 16.8Q279.6 19 277.6 19L276 18.2Z" fill="#9a00ff"/><rect x="276.3" y="22.9" width="10.7" height="2" fill="#cf8cff"/></svg>
<div class="ct id" style="left:615.5px;top:60.4px;letter-spacing:-0.431px;">ME00000076</div>
<div class="ct" style="left:694.0px;top:60.4px;letter-spacing:-0.245px;">Outsourcing service provider</div>
<div class="ct" style="left:916.4px;top:60.4px;letter-spacing:-0.205px;">Critical</div>
<div class="ct" style="left:1020.6px;top:60.4px;letter-spacing:0.042px;">100 %</div>
<div class="abs" style="left:582.6px;top:78.6px;width:549.8px;height:24.0px;background:#f4f4f4;"></div>
<div class="abs" style="left:609.0px;top:78.6px;width:1.6px;height:24.0px;background:#e9e9e9;"></div>
<div class="abs" style="left:686.8px;top:78.6px;width:1.6px;height:24.0px;background:#e9e9e9;"></div>
<div class="abs" style="left:896.0px;top:78.6px;width:1.6px;height:24.0px;background:#e9e9e9;"></div>
<div class="abs" style="left:1000.2px;top:78.6px;width:1.6px;height:24.0px;background:#e9e9e9;"></div>
<div class="abs" style="left:1079.2px;top:78.6px;width:1.6px;height:24.0px;background:#e9e9e9;"></div>
<svg class="abs" style="left:591.5px;top:85.7px" width="8.3" height="10.2" viewBox="275.6 11 11.6 14.2"><path d="M276 11.2H282.2Q286.4 11.6 286.4 16.6V22.9H277.2V21.4Q280.6 19.6 281 16.8Q279.6 19 277.6 19L276 18.2Z" fill="#9a00ff"/><rect x="276.3" y="22.9" width="10.7" height="2" fill="#cf8cff"/></svg>
<div class="ct id" style="left:615.5px;top:85.9px;letter-spacing:-0.431px;">ME00000094</div>
<div class="ct" style="left:694.0px;top:85.9px;letter-spacing:-0.213px;">Diversifikation des Lieferantenportfolios</div>
<div class="ct" style="left:916.4px;top:85.9px;letter-spacing:-0.213px;">High</div>
<div class="ct" style="left:1020.6px;top:85.9px;letter-spacing:0.066px;">75 %</div>
<div class="abs" style="left:582.6px;top:104.0px;width:549.8px;height:24.0px;background:#f4f4f4;"></div>
<div class="abs" style="left:609.0px;top:104.0px;width:1.6px;height:24.0px;background:#e9e9e9;"></div>
<div class="abs" style="left:686.8px;top:104.0px;width:1.6px;height:24.0px;background:#e9e9e9;"></div>
<div class="abs" style="left:896.0px;top:104.0px;width:1.6px;height:24.0px;background:#e9e9e9;"></div>
<div class="abs" style="left:1000.2px;top:104.0px;width:1.6px;height:24.0px;background:#e9e9e9;"></div>
<div class="abs" style="left:1079.2px;top:104.0px;width:1.6px;height:24.0px;background:#e9e9e9;"></div>
<svg class="abs" style="left:591.5px;top:111.1px" width="8.3" height="10.2" viewBox="275.6 11 11.6 14.2"><path d="M276 11.2H282.2Q286.4 11.6 286.4 16.6V22.9H277.2V21.4Q280.6 19.6 281 16.8Q279.6 19 277.6 19L276 18.2Z" fill="#9a00ff"/><rect x="276.3" y="22.9" width="10.7" height="2" fill="#cf8cff"/></svg>
<div class="ct id" style="left:615.5px;top:111.3px;letter-spacing:-0.431px;">ME00000071</div>
<div class="ct" style="left:694.0px;top:111.3px;letter-spacing:-0.197px;">Separation of functions between incompatib...</div>
<div class="ct" style="left:916.4px;top:111.3px;letter-spacing:-0.213px;">High</div>
<div class="ct" style="left:1020.6px;top:111.3px;letter-spacing:0.246px;">0 %</div>
<div class="abs" style="left:582.6px;top:129.5px;width:549.8px;height:24.0px;background:#f4f4f4;"></div>
<div class="abs" style="left:609.0px;top:129.5px;width:1.6px;height:24.0px;background:#e9e9e9;"></div>
<div class="abs" style="left:686.8px;top:129.5px;width:1.6px;height:24.0px;background:#e9e9e9;"></div>
<div class="abs" style="left:896.0px;top:129.5px;width:1.6px;height:24.0px;background:#e9e9e9;"></div>
<div class="abs" style="left:1000.2px;top:129.5px;width:1.6px;height:24.0px;background:#e9e9e9;"></div>
<div class="abs" style="left:1079.2px;top:129.5px;width:1.6px;height:24.0px;background:#e9e9e9;"></div>
<svg class="abs" style="left:591.5px;top:136.6px" width="8.3" height="10.2" viewBox="275.6 11 11.6 14.2"><path d="M276 11.2H282.2Q286.4 11.6 286.4 16.6V22.9H277.2V21.4Q280.6 19.6 281 16.8Q279.6 19 277.6 19L276 18.2Z" fill="#9a00ff"/><rect x="276.3" y="22.9" width="10.7" height="2" fill="#cf8cff"/></svg>
<div class="ct id" style="left:615.5px;top:136.8px;letter-spacing:-0.431px;">ME00000095</div>
<div class="ct" style="left:694.0px;top:136.8px;letter-spacing:-0.163px;">Increase of the stock level</div>
<div class="ct" style="left:916.4px;top:136.8px;letter-spacing:-0.213px;">High</div>
<div class="ct" style="left:1020.6px;top:136.8px;letter-spacing:0.042px;">100 %</div>
<div class="abs" style="left:582.6px;top:155.0px;width:549.8px;height:24.0px;background:#f4f4f4;"></div>
<div class="abs" style="left:609.0px;top:155.0px;width:1.6px;height:24.0px;background:#e9e9e9;"></div>
<div class="abs" style="left:686.8px;top:155.0px;width:1.6px;height:24.0px;background:#e9e9e9;"></div>
<div class="abs" style="left:896.0px;top:155.0px;width:1.6px;height:24.0px;background:#e9e9e9;"></div>
<div class="abs" style="left:1000.2px;top:155.0px;width:1.6px;height:24.0px;background:#e9e9e9;"></div>
<div class="abs" style="left:1079.2px;top:155.0px;width:1.6px;height:24.0px;background:#e9e9e9;"></div>
<svg class="abs" style="left:591.5px;top:162.1px" width="8.3" height="10.2" viewBox="275.6 11 11.6 14.2"><path d="M276 11.2H282.2Q286.4 11.6 286.4 16.6V22.9H277.2V21.4Q280.6 19.6 281 16.8Q279.6 19 277.6 19L276 18.2Z" fill="#9a00ff"/><rect x="276.3" y="22.9" width="10.7" height="2" fill="#cf8cff"/></svg>
<div class="ct id" style="left:615.5px;top:162.2px;letter-spacing:-0.431px;">ME00000083</div>
<div class="ct" style="left:694.0px;top:162.2px;letter-spacing:-0.163px;">Spying out information (external service pro...</div>
<div class="ct" style="left:916.4px;top:162.2px;letter-spacing:-0.213px;">High</div>
<div class="ct" style="left:1020.6px;top:162.2px;letter-spacing:0.066px;">50 %</div>
<div class="abs" style="left:582.6px;top:180.4px;width:549.8px;height:24.0px;background:#f4f4f4;"></div>
<div class="abs" style="left:609.0px;top:180.4px;width:1.6px;height:24.0px;background:#e9e9e9;"></div>
<div class="abs" style="left:686.8px;top:180.4px;width:1.6px;height:24.0px;background:#e9e9e9;"></div>
<div class="abs" style="left:896.0px;top:180.4px;width:1.6px;height:24.0px;background:#e9e9e9;"></div>
<div class="abs" style="left:1000.2px;top:180.4px;width:1.6px;height:24.0px;background:#e9e9e9;"></div>
<div class="abs" style="left:1079.2px;top:180.4px;width:1.6px;height:24.0px;background:#e9e9e9;"></div>
<svg class="abs" style="left:591.5px;top:187.5px" width="8.3" height="10.2" viewBox="275.6 11 11.6 14.2"><path d="M276 11.2H282.2Q286.4 11.6 286.4 16.6V22.9H277.2V21.4Q280.6 19.6 281 16.8Q279.6 19 277.6 19L276 18.2Z" fill="#9a00ff"/><rect x="276.3" y="22.9" width="10.7" height="2" fill="#cf8cff"/></svg>
<div class="ct id" style="left:615.5px;top:187.7px;letter-spacing:-0.431px;">ME00000088</div>
<div class="ct" style="left:694.0px;top:187.7px;letter-spacing:-0.257px;">Checking the stock level</div>
<div class="ct" style="left:916.4px;top:187.7px;letter-spacing:-0.372px;">Medium</div>
<div class="ct" style="left:1020.6px;top:187.7px;letter-spacing:0.371px;color:#666;">---</div>
<div class="abs" style="left:582.6px;top:205.9px;width:549.8px;height:24.0px;background:#f4f4f4;"></div>
<div class="abs" style="left:609.0px;top:205.9px;width:1.6px;height:24.0px;background:#e9e9e9;"></div>
<div class="abs" style="left:686.8px;top:205.9px;width:1.6px;height:24.0px;background:#e9e9e9;"></div>
<div class="abs" style="left:896.0px;top:205.9px;width:1.6px;height:24.0px;background:#e9e9e9;"></div>
<div class="abs" style="left:1000.2px;top:205.9px;width:1.6px;height:24.0px;background:#e9e9e9;"></div>
<div class="abs" style="left:1079.2px;top:205.9px;width:1.6px;height:24.0px;background:#e9e9e9;"></div>
<svg class="abs" style="left:591.5px;top:213.0px" width="8.3" height="10.2" viewBox="275.6 11 11.6 14.2"><path d="M276 11.2H282.2Q286.4 11.6 286.4 16.6V22.9H277.2V21.4Q280.6 19.6 281 16.8Q279.6 19 277.6 19L276 18.2Z" fill="#9a00ff"/><rect x="276.3" y="22.9" width="10.7" height="2" fill="#cf8cff"/></svg>
<div class="ct id" style="left:615.5px;top:213.1px;letter-spacing:-0.431px;">ME00000074</div>
<div class="ct" style="left:694.0px;top:213.1px;letter-spacing:-0.219px;">Encryption of communication</div>
<div class="ct" style="left:916.4px;top:213.1px;letter-spacing:-0.372px;">Medium</div>
<div class="ct" style="left:1020.6px;top:213.1px;letter-spacing:0.066px;">75 %</div>
<div class="abs" style="left:582.6px;top:231.3px;width:549.8px;height:24.0px;background:#f4f4f4;"></div>
<div class="abs" style="left:609.0px;top:231.3px;width:1.6px;height:24.0px;background:#e9e9e9;"></div>
<div class="abs" style="left:686.8px;top:231.3px;width:1.6px;height:24.0px;background:#e9e9e9;"></div>
<div class="abs" style="left:896.0px;top:231.3px;width:1.6px;height:24.0px;background:#e9e9e9;"></div>
<div class="abs" style="left:1000.2px;top:231.3px;width:1.6px;height:24.0px;background:#e9e9e9;"></div>
<div class="abs" style="left:1079.2px;top:231.3px;width:1.6px;height:24.0px;background:#e9e9e9;"></div>
<svg class="abs" style="left:591.5px;top:238.4px" width="8.3" height="10.2" viewBox="275.6 11 11.6 14.2"><path d="M276 11.2H282.2Q286.4 11.6 286.4 16.6V22.9H277.2V21.4Q280.6 19.6 281 16.8Q279.6 19 277.6 19L276 18.2Z" fill="#9a00ff"/><rect x="276.3" y="22.9" width="10.7" height="2" fill="#cf8cff"/></svg>
<div class="ct id" style="left:615.5px;top:238.6px;letter-spacing:-0.431px;">ME00000090</div>
<div class="ct" style="left:694.0px;top:238.6px;letter-spacing:-0.27px;">Checking the stock levels</div>
<div class="ct" style="left:916.4px;top:238.6px;letter-spacing:-0.372px;">Medium</div>
<div class="ct" style="left:1020.6px;top:238.6px;letter-spacing:0.042px;">100 %</div>
<div class="abs" style="left:582.6px;top:256.8px;width:549.8px;height:24.0px;background:#f4f4f4;"></div>
<div class="abs" style="left:609.0px;top:256.8px;width:1.6px;height:24.0px;background:#e9e9e9;"></div>
<div class="abs" style="left:686.8px;top:256.8px;width:1.6px;height:24.0px;background:#e9e9e9;"></div>
<div class="abs" style="left:896.0px;top:256.8px;width:1.6px;height:24.0px;background:#e9e9e9;"></div>
<div class="abs" style="left:1000.2px;top:256.8px;width:1.6px;height:24.0px;background:#e9e9e9;"></div>
<div class="abs" style="left:1079.2px;top:256.8px;width:1.6px;height:24.0px;background:#e9e9e9;"></div>
<div class="abs" style="left:592.0px;top:262.8px;width:5.0px;height:6.0px;background:#9a14e0;"></div>
<svg class="abs" style="left:0;top:0" width="1158" height="265" viewBox="139 369 1158 265"><circle cx="678.60" cy="409.30" r="3.80" fill="#069ca2"/><circle cx="678.60" cy="434.80" r="3.80" fill="#17447f"/><circle cx="678.60" cy="460.30" r="3.80" fill="#126a8f"/><circle cx="678.60" cy="485.80" r="3.80" fill="#069ca2"/><circle cx="678.60" cy="511.30" r="3.80" fill="#069ca2"/><circle cx="678.60" cy="536.80" r="3.80" fill="#069ca2"/><circle cx="678.60" cy="562.30" r="3.80" fill="#069ca2"/><circle cx="678.60" cy="587.80" r="3.80" fill="#069ca2"/><circle cx="678.60" cy="613.30" r="3.80" fill="#069ca2"/><circle cx="1046.60" cy="408.80" r="3.80" fill="#f4617a"/><circle cx="1151.40" cy="408.80" r="3.80" fill="#4a9bea"/><circle cx="1244.80" cy="408.80" r="3.80" fill="#126a8f"/><circle cx="1046.60" cy="434.25" r="3.80" fill="#f4617a"/><circle cx="1151.40" cy="434.25" r="3.80" fill="#0b3c91"/><circle cx="1244.80" cy="434.25" r="3.80" fill="#17447f"/><circle cx="1046.60" cy="459.70" r="3.80" fill="#fca77d"/><circle cx="1151.40" cy="459.70" r="3.80" fill="#1f6cc6"/><circle cx="1244.80" cy="459.70" r="3.80" fill="#126a8f"/><circle cx="1046.60" cy="485.15" r="3.80" fill="#fca77d"/><circle cx="1151.40" cy="485.15" r="3.80" fill="#cfe3fb"/><circle cx="1244.80" cy="485.15" r="3.80" fill="#126a8f"/><circle cx="1046.60" cy="510.60" r="3.80" fill="#fca77d"/><circle cx="1151.40" cy="510.60" r="3.80" fill="#0b3c91"/><circle cx="1244.80" cy="510.60" r="3.80" fill="#17447f"/><circle cx="1046.60" cy="536.05" r="3.80" fill="#fca77d"/><circle cx="1151.40" cy="536.05" r="3.80" fill="#4a9bea"/><circle cx="1244.80" cy="536.05" r="3.80" fill="#126a8f"/><circle cx="1046.60" cy="561.50" r="3.80" fill="#fdf07a"/><circle cx="1244.80" cy="561.50" r="3.80" fill="#12b3a8"/><circle cx="1046.60" cy="586.95" r="3.80" fill="#fdf07a"/><circle cx="1151.40" cy="586.95" r="3.80" fill="#1f6cc6"/><circle cx="1244.80" cy="586.95" r="3.80" fill="#0b8f9a"/><circle cx="1046.60" cy="612.40" r="3.80" fill="#fdf07a"/><circle cx="1151.40" cy="612.40" r="3.80" fill="#0b3c91"/><circle cx="1244.80" cy="612.40" r="3.80" fill="#17447f"/></svg>
<div class="abs" style="left:564.6px;top:3.8px;width:10.4px;height:262.0px;background:#fbfbfb;"></div>
<div class="abs" style="left:566.3px;top:20.7px;width:6.7px;height:123.3px;background:#8a8a8a;border-radius:3.35px"></div>
<svg class="abs" style="left:566.1px;top:9.5px" width="7" height="5.2" viewBox="0 0 8 5"><path d="M0 4.8L4 .2L8 4.8Z" fill="#8a8a8a"/></svg>
<svg class="abs" style="left:566.1px;top:253.4px" width="7" height="5.2" viewBox="0 0 8 5"><path d="M0 .2L4 4.8L8 .2Z" fill="#8a8a8a"/></svg>
<div class="abs" style="left:1132.8px;top:3.8px;width:10.4px;height:262.0px;background:#fbfbfb;"></div>
<div class="abs" style="left:1134.5px;top:20.7px;width:6.7px;height:106.3px;background:#8a8a8a;border-radius:3.35px"></div>
<svg class="abs" style="left:1134.3px;top:9.5px" width="7" height="5.2" viewBox="0 0 8 5"><path d="M0 4.8L4 .2L8 4.8Z" fill="#8a8a8a"/></svg>
<svg class="abs" style="left:1134.3px;top:253.4px" width="7" height="5.2" viewBox="0 0 8 5"><path d="M0 .2L4 4.8L8 .2Z" fill="#8a8a8a"/></svg>
</div>
</div></body></html>
